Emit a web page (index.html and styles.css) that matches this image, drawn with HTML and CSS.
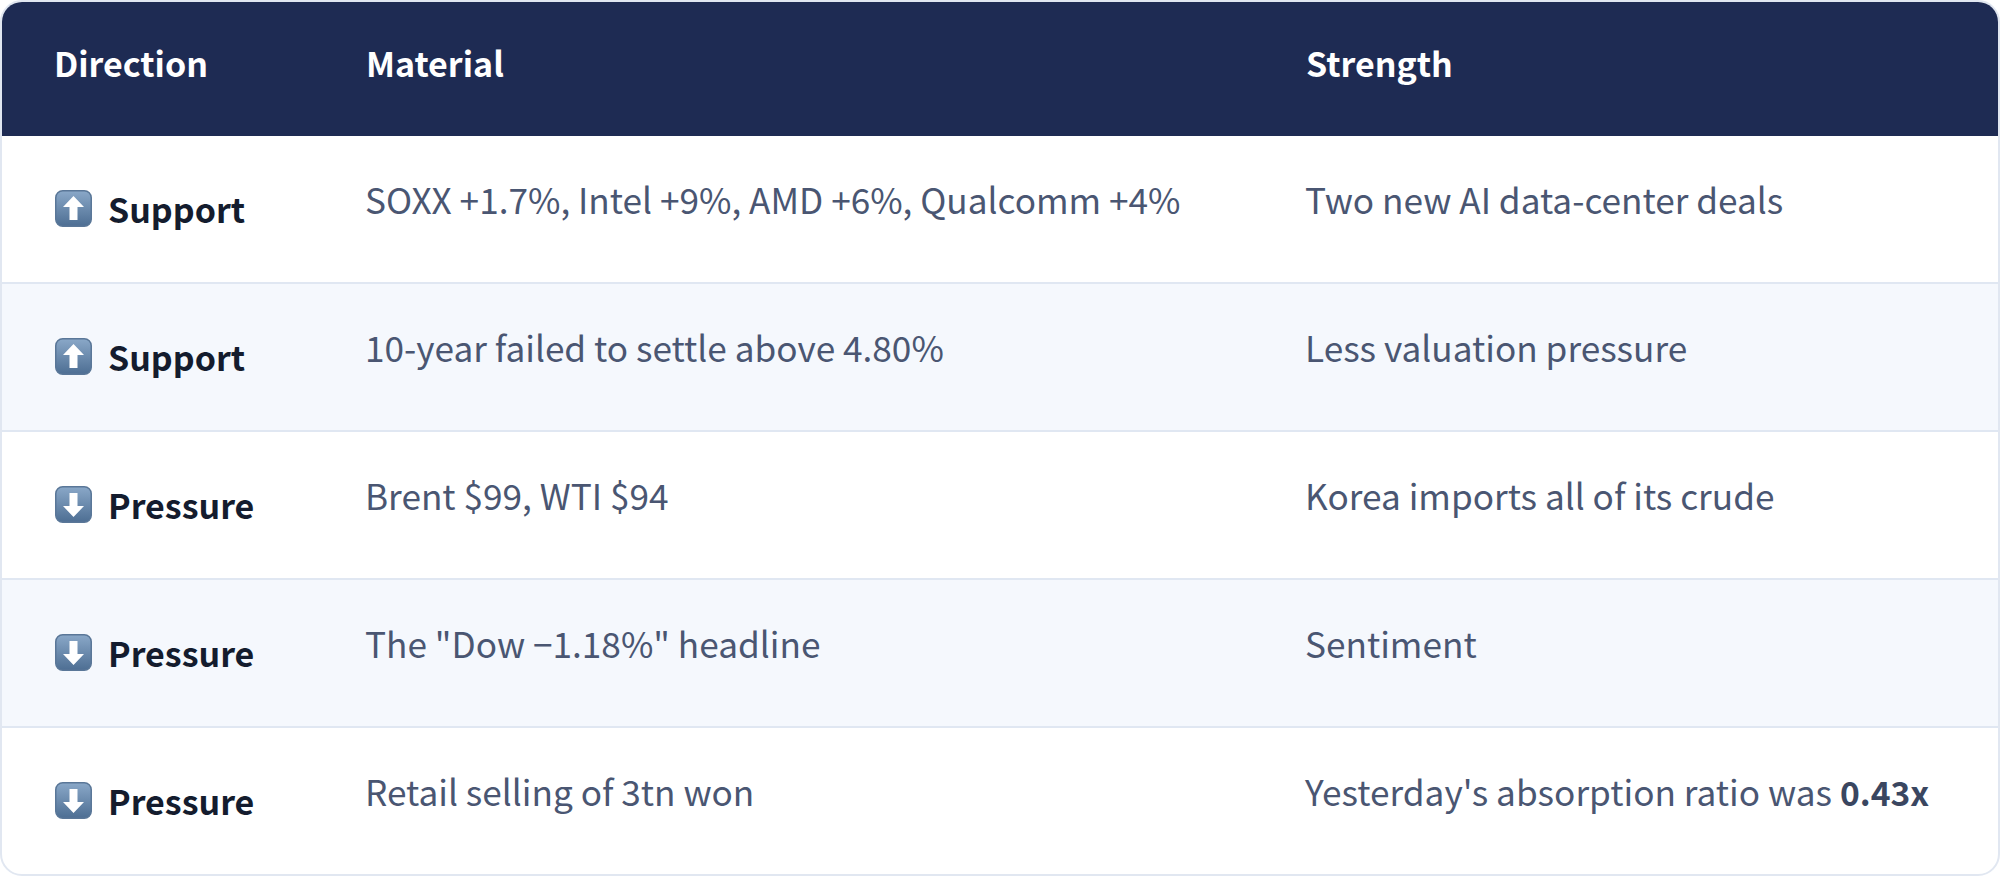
FILE: index.html
```html
<!DOCTYPE html>
<html lang="en">
<head>
<meta charset="utf-8">
<title>Direction table</title>
<link rel="stylesheet" href="styles.css">
</head>
<body>
<div class="card">
  <table class="grid">
    <colgroup>
      <col class="c1"><col class="c2"><col class="c3">
    </colgroup>
    <thead>
      <tr><th>Direction</th><th>Material</th><th>Strength</th></tr>
    </thead>
    <tbody>
      <tr>
        <td class="dir"><span class="dirwrap"><svg class="ico" viewBox="0 0 37 37"><defs><linearGradient id="g1" x1="0" y1="0" x2="0" y2="1"><stop offset="0" stop-color="#8aa8c8"/><stop offset="1" stop-color="#4d6e93"/></linearGradient></defs><rect x="0.75" y="0.75" width="35.5" height="35.5" rx="7" fill="url(#g1)" stroke="#5a7798" stroke-width="1.5"/><path d="M18.5 6 L29 17 H22.5 V30 H14.5 V17 H8 Z" fill="#fff"/></svg><span class="lbl">Support</span></span></td>
        <td class="txt">SOXX +1.7%, Intel +9%, AMD +6%, Qualcomm +4%</td>
        <td class="txt">Two new AI data-center deals</td>
      </tr>
      <tr>
        <td class="dir"><span class="dirwrap"><svg class="ico" viewBox="0 0 37 37"><defs><linearGradient id="g2" x1="0" y1="0" x2="0" y2="1"><stop offset="0" stop-color="#8aa8c8"/><stop offset="1" stop-color="#4d6e93"/></linearGradient></defs><rect x="0.75" y="0.75" width="35.5" height="35.5" rx="7" fill="url(#g2)" stroke="#5a7798" stroke-width="1.5"/><path d="M18.5 6 L29 17 H22.5 V30 H14.5 V17 H8 Z" fill="#fff"/></svg><span class="lbl">Support</span></span></td>
        <td class="txt">10-year failed to settle above 4.80%</td>
        <td class="txt">Less valuation pressure</td>
      </tr>
      <tr>
        <td class="dir"><span class="dirwrap"><svg class="ico" viewBox="0 0 37 37"><defs><linearGradient id="g3" x1="0" y1="0" x2="0" y2="1"><stop offset="0" stop-color="#8aa8c8"/><stop offset="1" stop-color="#4d6e93"/></linearGradient></defs><rect x="0.75" y="0.75" width="35.5" height="35.5" rx="7" fill="url(#g3)" stroke="#5a7798" stroke-width="1.5"/><path d="M18.5 31 L29 20 H22.5 V7 H14.5 V20 H8 Z" fill="#fff"/></svg><span class="lbl">Pressure</span></span></td>
        <td class="txt">Brent $99, WTI $94</td>
        <td class="txt">Korea imports all of its crude</td>
      </tr>
      <tr>
        <td class="dir"><span class="dirwrap"><svg class="ico" viewBox="0 0 37 37"><defs><linearGradient id="g4" x1="0" y1="0" x2="0" y2="1"><stop offset="0" stop-color="#8aa8c8"/><stop offset="1" stop-color="#4d6e93"/></linearGradient></defs><rect x="0.75" y="0.75" width="35.5" height="35.5" rx="7" fill="url(#g4)" stroke="#5a7798" stroke-width="1.5"/><path d="M18.5 31 L29 20 H22.5 V7 H14.5 V20 H8 Z" fill="#fff"/></svg><span class="lbl">Pressure</span></span></td>
        <td class="txt">The "Dow −1.18%" headline</td>
        <td class="txt">Sentiment</td>
      </tr>
      <tr>
        <td class="dir"><span class="dirwrap"><svg class="ico" viewBox="0 0 37 37"><defs><linearGradient id="g5" x1="0" y1="0" x2="0" y2="1"><stop offset="0" stop-color="#8aa8c8"/><stop offset="1" stop-color="#4d6e93"/></linearGradient></defs><rect x="0.75" y="0.75" width="35.5" height="35.5" rx="7" fill="url(#g5)" stroke="#5a7798" stroke-width="1.5"/><path d="M18.5 31 L29 20 H22.5 V7 H14.5 V20 H8 Z" fill="#fff"/></svg><span class="lbl">Pressure</span></span></td>
        <td class="txt">Retail selling of 3tn won</td>
        <td class="txt">Yesterday's absorption ratio was <b>0.43x</b></td>
      </tr>
    </tbody>
  </table>
</div>
</body>
</html>
```
FILE: styles.css
```css
html, body {
  margin: 0;
  padding: 0;
  background: #ffffff;
}
body {
  font-family: "Noto Sans CJK KR", "Noto Sans", sans-serif;
  font-size: 36px;
  width: 2000px;
  height: 876px;
}
.card {
  box-sizing: border-box;
  width: 2000px;
  height: 876px;
  border: 2px solid #e1e7f1;
  border-radius: 22px;
  overflow: hidden;
  background: #fff;
}
.grid {
  width: 100%;
  border-collapse: separate;
  border-spacing: 0;
  table-layout: fixed;
}
.c1 { width: 312px; }
.c2 { width: 940px; }
.c3 { width: auto; }
.grid th {
  height: 134px;
  box-sizing: border-box;
  background: #1e2b53;
  color: #ffffff;
  font-weight: 700;
  font-size: 34px;
  text-align: left;
  padding: 0 0 12px 52px;
  vertical-align: middle;
  line-height: 1.2;
}
.grid td {
  height: 146px;
  box-sizing: border-box;
  padding: 0 0 0 52px;
  vertical-align: middle;
  line-height: 1.2;
}
.grid td.dir {
  padding-left: 53px;
}
.grid tbody tr + tr td {
  border-top: 2px solid #e0e7f2;
  height: 148px;
}
.grid tbody tr:nth-child(even) td {
  background: #f5f8fd;
}
.grid td.txt {
  color: #4a5672;
  font-size: 35.2px;
  padding-left: 51px;
  padding-bottom: 20px;
  white-space: nowrap;
}
.grid td.txt b {
  color: #3a4660;
  font-weight: 700;
  font-size: 33.6px;
}
.dirwrap {
  display: flex;
  align-items: center;
  gap: 16px;
}
.ico {
  width: 37px;
  height: 37px;
  flex: none;
}
.lbl {
  color: #141c2e;
  font-weight: 700;
  font-size: 34px;
}
```
